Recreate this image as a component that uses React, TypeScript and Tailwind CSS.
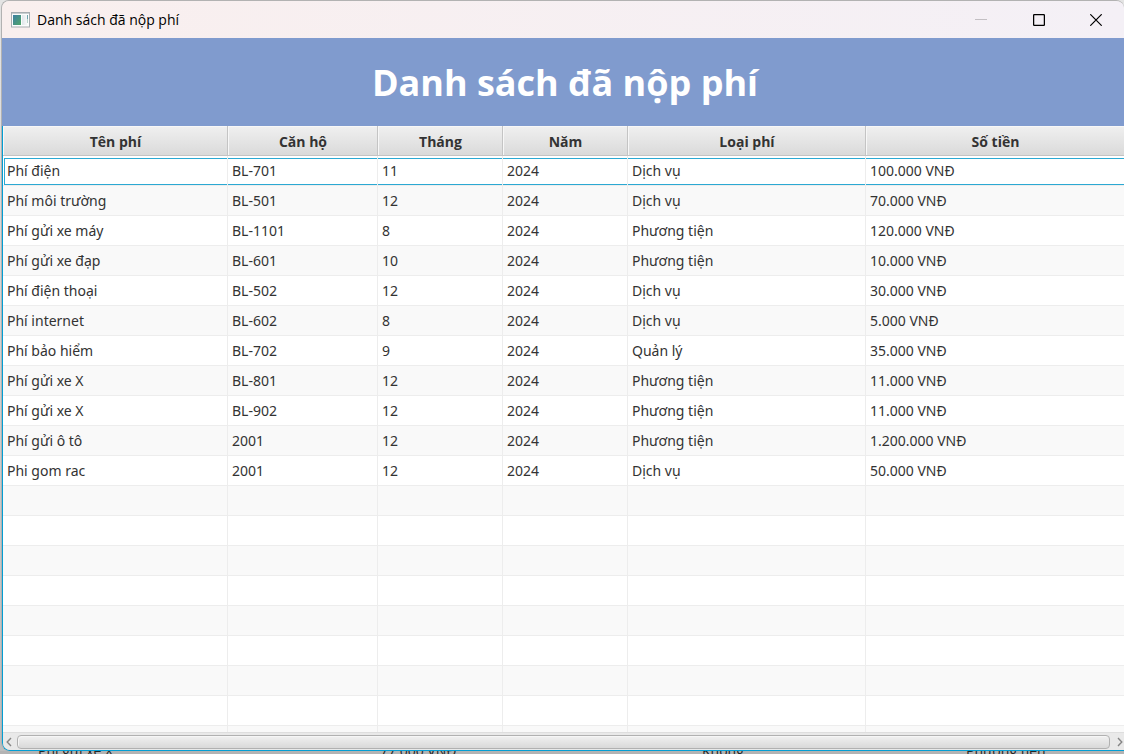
const columns = ['Tên phí', 'Căn hộ', 'Tháng', 'Năm', 'Loại phí', 'Số tiền'];

const fees = [
  ['Phí điện', 'BL-701', '11', '2024', 'Dịch vụ', '100.000 VNĐ'],
  ['Phí môi trường', 'BL-501', '12', '2024', 'Dịch vụ', '70.000 VNĐ'],
  ['Phí gửi xe máy', 'BL-1101', '8', '2024', 'Phương tiện', '120.000 VNĐ'],
  ['Phí gửi xe đạp', 'BL-601', '10', '2024', 'Phương tiện', '10.000 VNĐ'],
  ['Phí điện thoại', 'BL-502', '12', '2024', 'Dịch vụ', '30.000 VNĐ'],
  ['Phí internet', 'BL-602', '8', '2024', 'Dịch vụ', '5.000 VNĐ'],
  ['Phí bảo hiểm', 'BL-702', '9', '2024', 'Quản lý', '35.000 VNĐ'],
  ['Phí gửi xe X', 'BL-801', '12', '2024', 'Phương tiện', '11.000 VNĐ'],
  ['Phí gửi xe X', 'BL-902', '12', '2024', 'Phương tiện', '11.000 VNĐ'],
  ['Phí gửi ô tô', '2001', '12', '2024', 'Phương tiện', '1.200.000 VNĐ'],
  ['Phi gom rac', '2001', '12', '2024', 'Dịch vụ', '50.000 VNĐ'],
];

const emptyRow = ['', '', '', '', '', ''];
const rows = [...fees, ...Array.from({ length: 9 }, () => emptyRow)];

function AppIcon() {
  return (
    <svg width="19" height="16" viewBox="0 0 19 16" aria-hidden="true">
      <defs>
        <linearGradient id="pane" x1="0" y1="0" x2="1" y2="1">
          <stop offset="0" stopColor="#3d7fa3" />
          <stop offset="1" stopColor="#4fa568" />
        </linearGradient>
        <linearGradient id="side" x1="0" y1="0" x2="1" y2="0">
          <stop offset="0" stopColor="#dfe6ea" />
          <stop offset="1" stopColor="#f7f8f8" />
        </linearGradient>
      </defs>
      <rect x="0.5" y="0.5" width="18" height="14.5" fill="#fbfcfc" stroke="#a7adb1" />
      <rect x="1" y="1" width="17" height="1" fill="#c9ced1" />
      <rect x="2" y="3" width="8" height="10" fill="url(#pane)" />
      <rect x="11" y="3" width="5" height="10" fill="url(#side)" />
      <rect x="16" y="3" width="1" height="4" fill="#6fa3ae" />
      <rect x="16" y="7" width="1" height="4" fill="#b8d3cc" />
    </svg>
  );
}

function TitleBar() {
  return (
    <header className="flex h-[37px] shrink-0 items-center bg-gradient-to-r from-[#f9efee] to-[#f4f0f6] pl-[9px]">
      <AppIcon />
      <span className="ml-[7px] flex-1 text-sm text-black">Danh sách đã nộp phí</span>
      <button type="button" aria-label="Thu nhỏ" className="flex h-full w-[58px] items-center justify-center">
        <svg width="12" height="12" viewBox="0 0 12 12"><path d="M0 5.5H12" stroke="#c3bfc3" /></svg>
      </button>
      <button type="button" aria-label="Phóng to" className="flex h-full w-[58px] items-center justify-center">
        <svg width="12" height="12" viewBox="0 0 12 12"><rect x="0.6" y="0.6" width="10.8" height="10.8" rx="1" fill="none" stroke="#000" strokeWidth="1.3" /></svg>
      </button>
      <button type="button" aria-label="Đóng" className="flex h-full w-14 items-center justify-center">
        <svg width="12" height="12" viewBox="0 0 12 12"><path d="M0.3 0.3L11.7 11.7M11.7 0.3L0.3 11.7" stroke="#000" strokeWidth="1.2" /></svg>
      </button>
    </header>
  );
}

function FeeTable() {
  return (
    <div className="min-h-0 flex-1 overflow-hidden bg-white">
      <table className="w-full table-fixed border-separate border-spacing-0 text-sm text-[#333333]">
        <colgroup>
          <col className="w-[225px]" />
          <col className="w-[150px]" />
          <col className="w-[125px]" />
          <col className="w-[125px]" />
          <col className="w-[238px]" />
          <col />
        </colgroup>
        <thead>
          <tr>
            {columns.map((name) => (
              <th
                key={name}
                scope="col"
                className="h-[30px] border-r border-b border-[#c4c4c4] bg-gradient-to-b from-[#f0f0f0] to-[#dadada] p-0 pt-[2px] pl-px font-bold shadow-[inset_1px_1px_0_#f7f7f7] last:border-r-0"
              >
                {name}
              </th>
            ))}
          </tr>
        </thead>
        <tbody className="font-['Noto_Sans','Open_Sans',sans-serif]">
          {rows.map((row, index) => (
            <tr key={index} className="bg-white even:bg-[#f9f9f9]">
              {row.map((value, column) => (
                <td key={column} className="group h-[30px] border-r border-b border-[#ededed] p-0 last:border-r-0">
                  {index === 0 ? (
                    <div className="mt-px flex h-[27px] items-center border-y border-[#2ba9d3] pl-1 group-first:ml-px group-first:border-l group-first:pl-[2px]">
                      {value}
                    </div>
                  ) : (
                    <div className="flex h-[29px] items-center pl-1">{value}</div>
                  )}
                </td>
              ))}
            </tr>
          ))}
        </tbody>
      </table>
    </div>
  );
}

function HorizontalScrollBar() {
  return (
    <div className="flex h-[18px] shrink-0 items-center border-t border-[#dedede] bg-[#e9e9e9]">
      <button type="button" aria-label="Cuộn trái" className="flex h-full w-[14px] items-center justify-start pl-[3px]">
        <svg width="6" height="10" viewBox="0 0 6 10"><path d="M5 1L1.2 5L5 9" fill="none" stroke="#858585" strokeWidth="1.4" /></svg>
      </button>
      <div className="h-[14px] flex-1 rounded-[4px] border border-[#b1b1b1] bg-gradient-to-b from-[#f1f1f1] to-[#d9d9d9] shadow-[inset_1px_1px_0_#f6f6f6]" />
      <button type="button" aria-label="Cuộn phải" className="flex h-full w-[14px] items-center justify-end pr-px">
        <svg width="6" height="10" viewBox="0 0 6 10"><path d="M1 1L4.8 5L1 9" fill="none" stroke="#858585" strokeWidth="1.4" /></svg>
      </button>
    </div>
  );
}

export default function App() {
  return (
    <div className="flex h-screen flex-col overflow-hidden bg-[#b3b3b3] font-['Open_Sans','Noto_Sans',sans-serif]">
      <div className="flex min-h-0 flex-1 bg-gradient-to-b from-[#e4e4e4] to-[#bdbdbd]">
        <div className="w-px shrink-0" />
        <main className="flex min-w-0 flex-1 flex-col overflow-hidden rounded-t-lg rounded-bl-lg border-t border-l border-[#b2b2b2]">
          <TitleBar />
          <div className="flex h-[88px] shrink-0 items-center justify-center bg-[#809bce] pt-[2px]">
            <h1 className="pl-1 text-4xl font-bold text-white">Danh sách đã nộp phí</h1>
          </div>
          <section className="flex min-h-0 flex-1 flex-col overflow-hidden rounded-bl-lg border-b border-l border-[#039ed3]">
            <FeeTable />
            <HorizontalScrollBar />
          </section>
        </main>
      </div>
      <div className="flex h-[3px] shrink-0 items-end overflow-hidden pl-[38px] text-sm leading-[7px] text-[#252525]" aria-hidden="true">
        <span className="w-[342px] shrink-0">Phí gửi xe X</span>
        <span className="w-[322px] shrink-0">77.000 VNĐ</span>
        <span className="w-[264px] shrink-0">Không</span>
        <span className="shrink-0">Phương tiện</span>
      </div>
    </div>
  );
}
